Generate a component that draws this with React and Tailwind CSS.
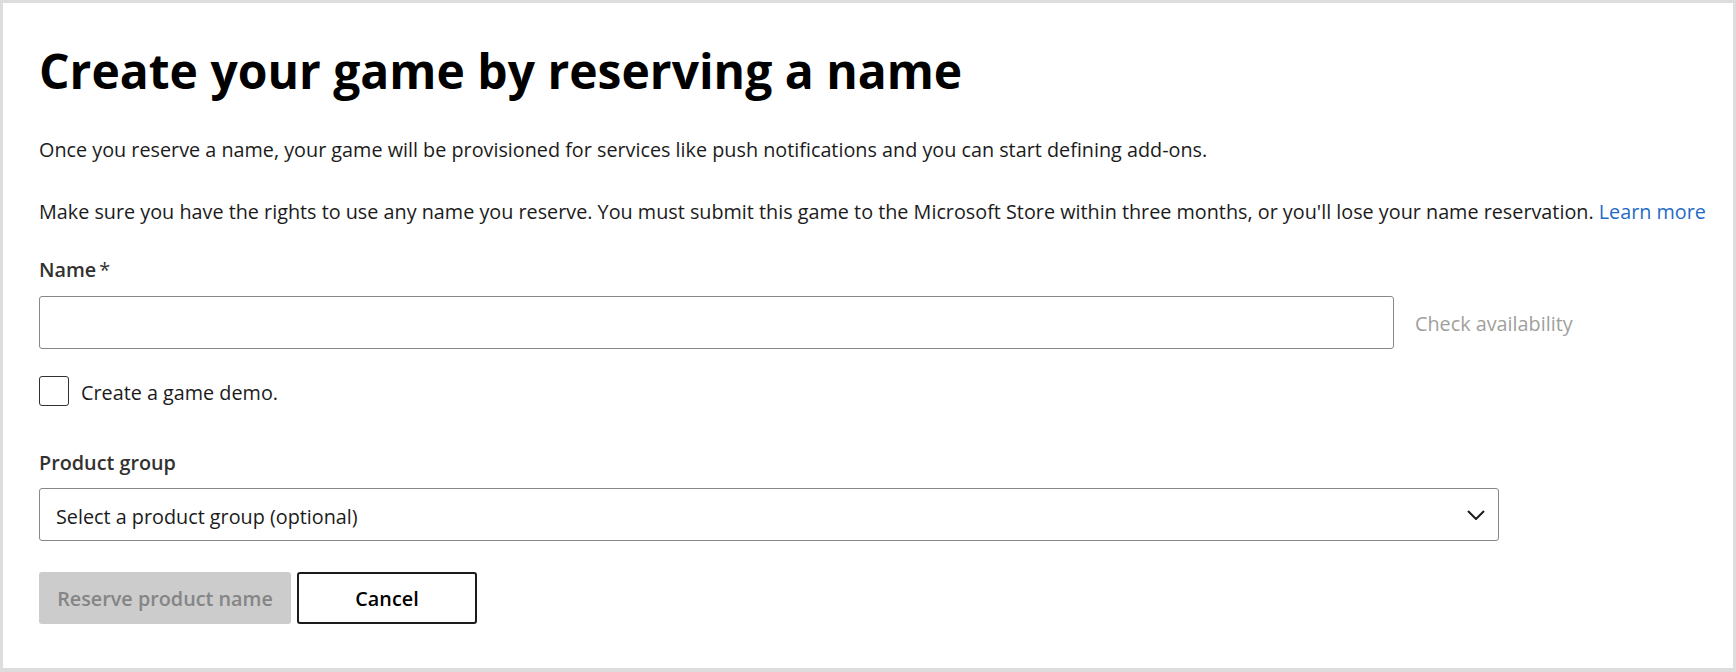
import React from "react";

export default function App() {
  return (
    <div className="h-[672px] w-full bg-[#dddddd] font-['Open_Sans',sans-serif]">
      <div className="h-[672px] border-[3px] border-b-4 border-[#dddddd] bg-white pl-[36px] pt-[36px]">
        <h1 className="text-[48px] font-bold leading-[64px] text-black">
          Create your game by reserving a name
        </h1>
        <p className="mt-[33px] whitespace-nowrap text-[19.8px] leading-[28px] text-[#1b1b1b]">
          Once you reserve a name, your game will be provisioned for services like push notifications and you can start defining add-ons.
        </p>
        <p className="mt-[34px] whitespace-nowrap text-[19.8px] leading-[28px] text-[#1b1b1b]">
          Make sure you have the rights to use any name you reserve. You must submit this game to the Microsoft Store within three months, or you'll lose your name reservation.{" "}
          <a href="#" className="text-[#1f6bc6]">Learn more</a>
        </p>

        <label className="mt-[30px] block text-[19.8px] font-semibold leading-[28px] text-[#323130]">
          Name<span className="ml-[3px] font-normal">*</span>
        </label>
        <div className="mt-[12px] flex items-center">
          <input
            type="text"
            className="h-[53px] w-[1355px] rounded-[3px] border border-[#8a8886] bg-white px-[16px] text-[19.8px] outline-none"
          />
          <span className="ml-[21px] pt-[3px] text-[19.8px] leading-[28px] text-[#a19f9d]">Check availability</span>
        </div>

        <div className="mt-[27px] flex h-[30px] items-center gap-[12px]">
          <div className="h-[30px] w-[30px] rounded-[3px] border border-[#323130] bg-white" />
          <span className="pt-[3px] text-[19.8px] leading-[27px] text-[#1b1b1b]">Create a game demo.</span>
        </div>

        <label className="mt-[43px] block text-[19.8px] font-semibold leading-[28px] text-[#323130]">
          Product group
        </label>
        <div className="mt-[11px] flex h-[53px] w-[1460px] items-center justify-between rounded-[3px] border border-[#8a8886] bg-white pl-[16px] pr-[13px]">
          <span className="pt-[4px] text-[19.8px] leading-[28px] text-[#1b1b1b]">Select a product group (optional)</span>
          <svg width="18" height="10" viewBox="0 0 18 10" fill="none">
            <polyline points="1,1 9,9 17,1" stroke="#1b1b1b" strokeWidth="2" strokeLinejoin="miter" />
          </svg>
        </div>

        <div className="mt-[31px] flex gap-[6px]">
          <button className="h-[52px] w-[252px] rounded-[3px] bg-[#cccccc] pt-[2px] text-[19.8px] font-semibold text-[#858585]">
            Reserve product name
          </button>
          <button className="h-[52px] w-[180px] rounded-[3px] border-2 border-[#1b1b1b] bg-white pt-[2px] text-[19.8px] font-semibold text-black">
            Cancel
          </button>
        </div>
      </div>
    </div>
  );
}
